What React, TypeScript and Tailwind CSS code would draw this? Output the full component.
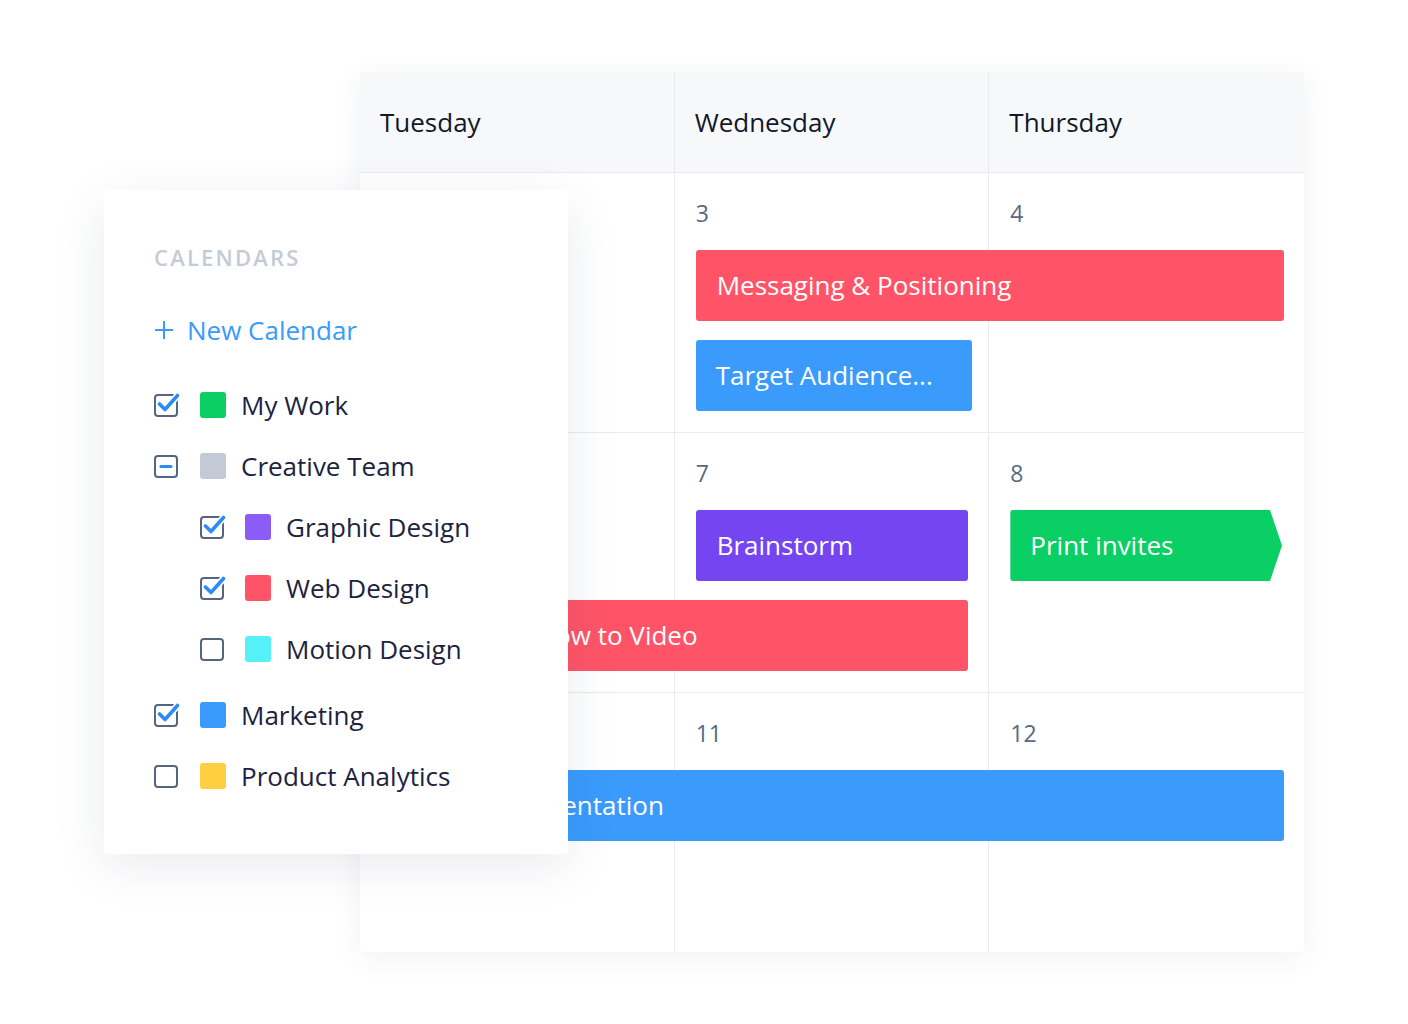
import React from "react";

const font = { fontFamily: '"Open Sans", "Noto Sans", sans-serif' };

function Check({ state }: { state: "on" | "off" | "mixed" }) {
  return (
    <svg width="26" height="26" viewBox="0 0 26 26" className="shrink-0">
      <rect x="1" y="3" width="22" height="21" rx="3" fill="none" stroke="#56657f" strokeWidth="2" />
      {state === "on" && (
        <>
          <path d="M5.5 12 L11 17.5 L23.5 3.5" fill="none" stroke="#ffffff" strokeWidth="7" strokeLinecap="round" strokeLinejoin="round" />
          <path d="M5.5 12 L11 17.5 L23.5 3.5" fill="none" stroke="#2d8cf4" strokeWidth="3.6" strokeLinecap="round" strokeLinejoin="round" />
        </>
      )}
      {state === "mixed" && <path d="M7 13.5 H17" stroke="#2d8cf4" strokeWidth="3.2" strokeLinecap="round" />}
    </svg>
  );
}

function Item({ state, color, label, indent, extraTop }: { state: "on" | "off" | "mixed"; color: string; label: string; indent?: boolean; extraTop?: boolean }) {
  return (
    <div className={`flex h-[61px] items-center ${indent ? "pl-[46px]" : ""} ${extraTop ? "mt-[5px]" : ""}`}>
      <Check state={state} />
      <div className={`${indent ? "ml-[19px]" : "ml-[20px]"} h-[26px] w-[26px] shrink-0 rounded-[3px]`} style={{ background: color }} />
      <span className="ml-[15px] text-[26px] leading-[36px] text-[#1c2340]">{label}</span>
    </div>
  );
}

const dateCls = "pt-[23px] text-[23px] leading-[34px] text-[#586983]";

export default function App() {
  return (
    <div className="relative h-[1024px] w-[1408px] overflow-hidden bg-white" style={font}>
      <div className="pl-[360px] pt-[72px]">
        <div className="h-[880px] w-[944px] overflow-hidden rounded-[4px] bg-white shadow-[0_6px_30px_rgba(40,60,100,0.07)]">
          <div className="grid h-[101px] grid-cols-3 border-b border-[#e8ebf0] bg-[#f7f8fa]">
            {["Tuesday", "Wednesday", "Thursday"].map((d, i) => (
              <div key={d} className={`flex items-center pl-[20px] text-[26px] text-[#121829] ${i < 2 ? "border-r border-[#e8ebf0]" : ""}`}>
                {d}
              </div>
            ))}
          </div>

          {/* Week 1 */}
          <div className="grid h-[260px] grid-cols-3 grid-rows-[77px_71px_19px_71px_1fr] border-b border-[#e8ebf0]">
            <div className="col-start-1 row-span-5 row-start-1 border-r border-[#e8ebf0]" />
            <div className={`col-start-2 row-span-5 row-start-1 border-r border-[#e8ebf0] pl-[21px] ${dateCls}`}>3</div>
            <div className={`col-start-3 row-span-5 row-start-1 pl-[21px] ${dateCls}`}>4</div>
            <div className="col-span-2 col-start-2 row-start-2 ml-[21px] mr-[20px] flex items-center rounded-[3px] bg-[#ff5468] pl-[21px] text-[26px] text-white">
              Messaging &amp; Positioning
            </div>
            <div className="col-start-2 row-start-4 ml-[21px] mr-[17px] flex items-center rounded-[3px] bg-[#3a9bfd] pl-[20px] text-[26px] text-white">
              Target Audience...
            </div>
          </div>

          {/* Week 2 */}
          <div className="grid h-[260px] grid-cols-3 grid-rows-[77px_71px_19px_71px_1fr] border-b border-[#e8ebf0]">
            <div className="col-start-1 row-span-5 row-start-1 border-r border-[#e8ebf0]" />
            <div className={`col-start-2 row-span-5 row-start-1 border-r border-[#e8ebf0] pl-[21px] ${dateCls}`}>7</div>
            <div className={`col-start-3 row-span-5 row-start-1 pl-[21px] ${dateCls}`}>8</div>
            <div className="col-start-2 row-start-2 ml-[21px] mr-[21px] flex items-center rounded-[3px] bg-[#7545f1] pl-[21px] text-[26px] text-white">
              Brainstorm
            </div>
            <div className="col-start-3 row-start-2 ml-[21px] mr-[22px] flex items-center rounded-l-[3px] bg-[#0acf64] pl-[20px] text-[26px] text-white [clip-path:polygon(0_0,calc(100%-12px)_0,100%_50%,calc(100%-12px)_100%,0_100%)]">
              Print invites
            </div>
            <div className="col-span-2 col-start-1 row-start-4 ml-[21px] mr-[21px] flex items-center rounded-[3px] bg-[#ff5468] pl-[155px] text-[26px] text-white">
              How to Video
            </div>
          </div>

          {/* Week 3 */}
          <div className="grid h-[259px] grid-cols-3 grid-rows-[77px_71px_1fr]">
            <div className="col-start-1 row-span-3 row-start-1 border-r border-[#e8ebf0]" />
            <div className={`col-start-2 row-span-3 row-start-1 border-r border-[#e8ebf0] pl-[21px] ${dateCls}`}>11</div>
            <div className={`col-start-3 row-span-3 row-start-1 pl-[21px] ${dateCls}`}>12</div>
            <div className="col-span-3 col-start-1 row-start-2 ml-[21px] mr-[20px] flex items-center rounded-[3px] bg-[#3a9bfd] pl-[128px] text-[26px] text-white">
              Presentation
            </div>
          </div>
        </div>
      </div>

      {/* Calendars panel overlay */}
      <div className="absolute left-[104px] top-[190px] h-[664px] w-[464px] rounded-[4px] bg-white pl-[50px] pt-[52px] shadow-[0_12px_50px_rgba(40,55,90,0.10)]">
        <div className="h-[30px] text-[22px] font-semibold leading-[30px] tracking-[2.2px] text-[#c4cbd7]">CALENDARS</div>
        <div className="mt-[27px] flex h-[62px] items-center text-[#3a9bfd]">
          <svg width="20" height="20" viewBox="0 0 20 20" className="shrink-0">
            <path d="M10 1 V19 M1 10 H19" stroke="#3a9bfd" strokeWidth="2" />
          </svg>
          <span className="ml-[13px] text-[26px] leading-[36px]">New Calendar</span>
        </div>
        <div className="mt-[13px]">
          <Item state="on" color="#0bcf63" label="My Work" />
          <Item state="mixed" color="#c3cad6" label="Creative Team" />
          <Item state="on" color="#8b5cf6" label="Graphic Design" indent />
          <Item state="on" color="#ff5468" label="Web Design" indent />
          <Item state="off" color="#56f0f8" label="Motion Design" indent />
          <Item state="on" color="#3a9bfd" label="Marketing" extraTop />
          <Item state="off" color="#ffcf40" label="Product Analytics" />
        </div>
      </div>
    </div>
  );
}
